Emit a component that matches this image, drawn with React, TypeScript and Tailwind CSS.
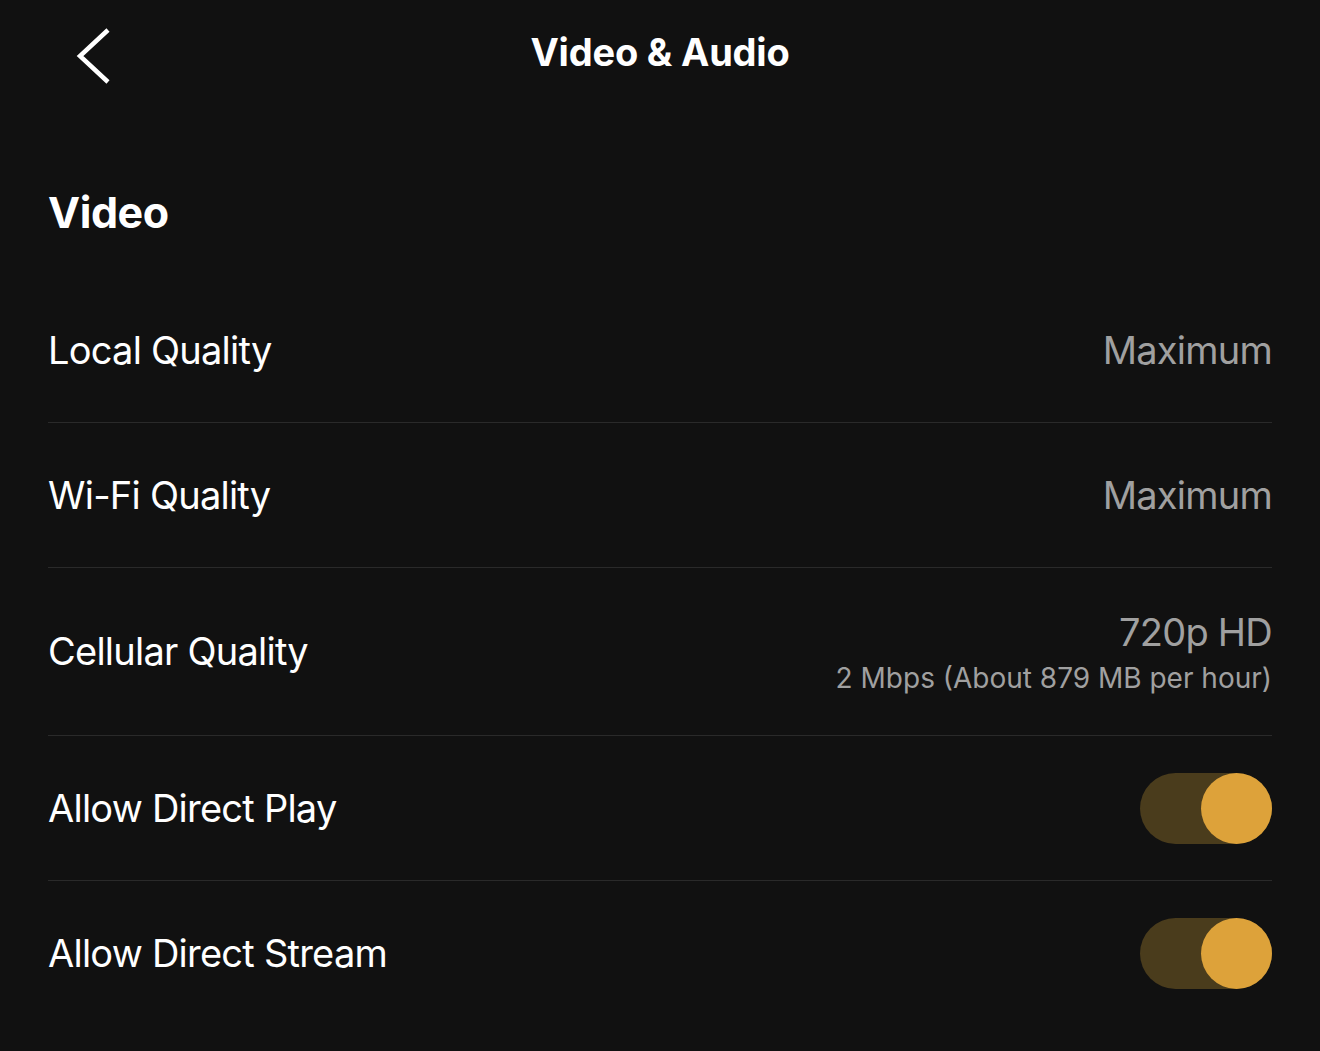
function Toggle({ on }: { on: boolean }) {
  return (
    <div className={`relative w-[132px] h-[71px] rounded-full ${on ? "bg-[#4a3c1c]" : "bg-[#333333]"}`}>
      <div className={`absolute top-0 w-[71px] h-[71px] rounded-full ${on ? "right-0 bg-[#dda23a]" : "left-0 bg-[#888888]"}`} />
    </div>
  );
}

function Row({ label, children, tall, last }: { label: string; children: React.ReactNode; tall?: boolean; last?: boolean }) {
  return (
    <div className={`flex items-center justify-between ${tall ? "h-[168px]" : "h-[145px]"} ${last ? "" : "border-b border-[#2a2a2a]"}`}>
      <div className="text-[38px] text-white tracking-[-0.02em]">{label}</div>
      <div className="flex flex-col items-end">{children}</div>
    </div>
  );
}

export default function App() {
  return (
    <div className="min-h-[1051px] bg-[#111111] text-white" style={{ fontFamily: "Inter, 'Noto Sans', sans-serif" }}>
      <div className="relative h-[106px] flex items-center justify-center">
        <button className="absolute left-[74px] top-[27px] text-white">
          <svg width="38" height="58" viewBox="0 0 38 58" fill="none" stroke="currentColor" strokeWidth="4.5" strokeLinecap="butt" strokeLinejoin="miter">
            <polyline points="34,3 6,29 34,55" />
          </svg>
        </button>
        <h1 className="text-[38px] font-bold tracking-[-0.005em] -mt-[2px]">Video &amp; Audio</h1>
      </div>

      <div className="px-[48px]">
        <h2 className="text-[43px] font-bold mt-[80px] mb-[40px] leading-[52px] tracking-[-0.01em]">Video</h2>

        <Row label="Local Quality">
          <div className="text-[38px] text-[#a0a0a0] tracking-[-0.02em]">Maximum</div>
        </Row>
        <Row label="Wi-Fi Quality">
          <div className="text-[38px] text-[#a0a0a0] tracking-[-0.02em]">Maximum</div>
        </Row>
        <Row label="Cellular Quality" tall>
          <div className="text-[38px] text-[#a0a0a0] leading-[48px] tracking-[-0.02em]">720p HD</div>
          <div className="text-[28px] text-[#a0a0a0] leading-[36px] tracking-[0em] mt-[4px]">2 Mbps (About 879 MB per hour)</div>
        </Row>
        <Row label="Allow Direct Play">
          <Toggle on />
        </Row>
        <Row label="Allow Direct Stream" last>
          <Toggle on />
        </Row>
      </div>
    </div>
  );
}
